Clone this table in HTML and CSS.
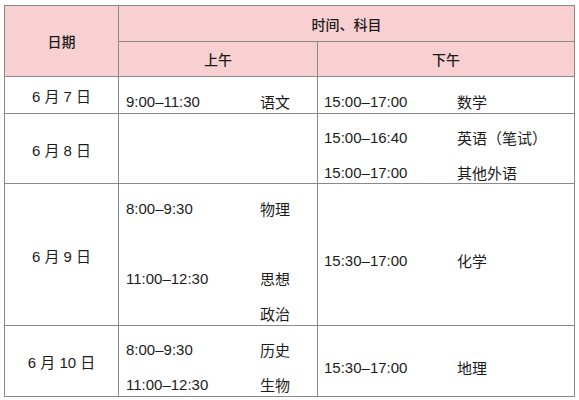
FILE: index.html
```html
<!DOCTYPE html>
<html lang="zh-CN">
<head>
<meta charset="utf-8">
<title>考试时间安排</title>
<link rel="stylesheet" href="styles.css">
</head>
<body>
<div class="sched">
  <div class="cell head h-date">日期</div>
  <div class="cell head h-span">时间、科目</div>
  <div class="cell head">上午</div>
  <div class="cell head">下午</div>

  <div class="cell date">6 月 7 日</div>
  <div class="cell slot am">
    <div class="entry"><span class="time">9:00–11:30</span><span class="subj">语文</span></div>
  </div>
  <div class="cell slot pm">
    <div class="entry"><span class="time">15:00–17:00</span><span class="subj">数学</span></div>
  </div>

  <div class="cell date">6 月 8 日</div>
  <div class="cell slot am"></div>
  <div class="cell slot pm">
    <div class="entry"><span class="time">15:00–16:40</span><span class="subj">英语（笔试）</span></div>
    <div class="entry"><span class="time">15:00–17:00</span><span class="subj">其他外语</span></div>
  </div>

  <div class="cell date">6 月 9 日</div>
  <div class="cell slot am">
    <div class="entry"><span class="time">8:00–9:30</span><span class="subj">物理</span></div>
    <div class="entry blank"></div>
    <div class="entry"><span class="time">11:00–12:30</span><span class="subj">思想政治</span></div>
  </div>
  <div class="cell slot pm">
    <div class="entry"><span class="time">15:30–17:00</span><span class="subj">化学</span></div>
  </div>

  <div class="cell date">6 月 10 日</div>
  <div class="cell slot am">
    <div class="entry"><span class="time">8:00–9:30</span><span class="subj">历史</span></div>
    <div class="entry"><span class="time">11:00–12:30</span><span class="subj">生物</span></div>
  </div>
  <div class="cell slot pm">
    <div class="entry"><span class="time">15:30–17:00</span><span class="subj">地理</span></div>
  </div>
</div>
</body>
</html>
```
FILE: styles.css
```css
html, body {
  margin: 0;
  padding: 0;
  background: #ffffff;
}

body {
  font-family: "Liberation Sans", "Noto Sans CJK SC", sans-serif;
  color: #1c1c1c;
}

.sched {
  margin: 5px 0 0 4px;
  width: 571px;
  display: grid;
  grid-template-columns: 113px 198px 256px;
  grid-template-rows: 35px 34px 36px 69px 141px 70px;
  gap: 1px;
  padding: 1px;
  box-sizing: border-box;
  background: #8a8a8a;
}

.cell {
  background: #ffffff;
  min-width: 0;
  min-height: 0;
}

.head {
  background: #f8d0d2;
  display: flex;
  align-items: center;
  justify-content: center;
  font-family: "Noto Sans CJK SC", sans-serif;
  font-size: 14px;
  font-weight: 500;
}

.h-date {
  grid-row: 1 / 3;
  grid-column: 1;
}

.h-span {
  grid-column: 2 / 4;
}

.date {
  display: flex;
  align-items: center;
  justify-content: center;
  font-size: 15px;
  padding-top: 1px;
}

.slot {
  display: flex;
  flex-direction: column;
  justify-content: center;
  padding-top: 12px;
  box-sizing: border-box;
}

.am {
  padding-left: 7px;
}

.pm {
  padding-left: 6px;
}

.entry {
  display: grid;
  line-height: 35px;
  flex: none;
}

.am .entry {
  grid-template-columns: 134px 32px;
}

.pm .entry {
  grid-template-columns: 133px auto;
}

.blank {
  height: 35px;
}

.time {
  font-size: 15px;
}

.subj {
  font-family: "Noto Sans CJK SC", sans-serif;
  font-size: 15px;
}
```
